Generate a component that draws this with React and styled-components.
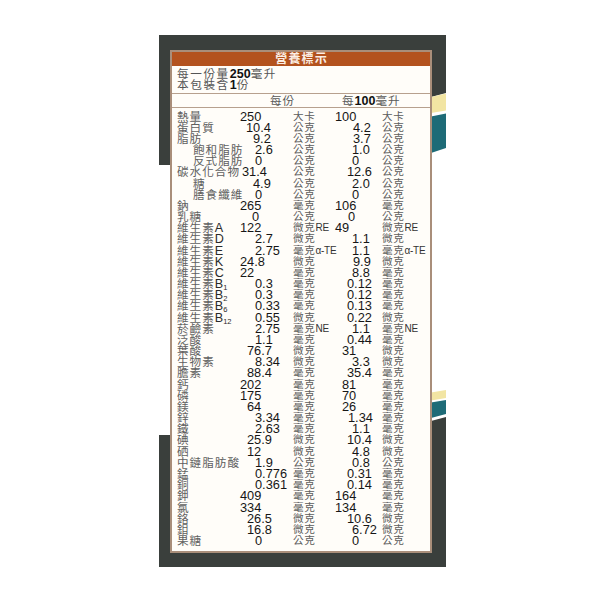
import React from "react";
import styled, { createGlobalStyle } from "styled-components";

const Global = createGlobalStyle`
  html, body { margin: 0; padding: 0; background: #ffffff; }
  body { font-family: "Liberation Sans", "Noto Sans CJK TC", sans-serif; }
`;

const SANS = `"Liberation Sans", "Noto Sans CJK TC", sans-serif`;

const Page = styled.div`
  width: 600px;
  height: 600px;
  box-sizing: border-box;
  padding: 35px 0 0 159px;
`;

const Panel = styled.div`
  position: relative;
  width: 287px;
  height: 532px;
  box-sizing: border-box;
  padding: 15px 14px 14px 11px;
  background: #3a3f3c;
`;

const Decor = styled.svg`
  position: absolute;
  left: 0;
  top: 0;
  z-index: 0;
`;

const Label = styled.div`
  position: relative;
  z-index: 1;
  box-sizing: border-box;
  height: 503px;
  border: 2px solid #a98e7a;
  background: #fffdf9;
  display: flex;
  flex-direction: column;
  font-family: ${SANS};
`;

const TitleBar = styled.div`
  height: 14px;
  line-height: 14px;
  background: #b3521e;
  color: #fbeee4;
  text-align: center;
  font-size: 12px;
  font-weight: 700;
  letter-spacing: 1.2px;
  text-indent: 1.2px;
`;

const InfoBlock = styled.div`
  padding: 1.5px 5px 3px 5px;
  border-bottom: 1px solid #b7a08e;
`;

const InfoLine = styled.div`
  height: 11px;
  line-height: 11px;
  font-size: 11.6px;
  letter-spacing: 1.6px;
  color: #555;
  white-space: nowrap;
`;

const Strong = styled.span`
  color: #111;
  font-weight: 700;
  font-size: 12.5px;
  letter-spacing: 0;
`;

const Grid = styled.div`
  display: grid;
  grid-template-columns: 63px 53px 42px 47px 1fr;
  padding-left: 5px;
  white-space: nowrap;
`;

const HeadRow = styled(Grid)`
  height: 13.5px;
  line-height: 14px;
  color: #5a5a5a;
  border-bottom: 1px solid #b7a08e;
`;

const HeadCell = styled.span`
  padding-left: ${(p) => p.$off || 0}px;
  font-size: 11.6px;
  letter-spacing: 1px;
`;

const Rows = styled.div`
  padding-top: 2.5px;
`;

const Row = styled(Grid)`
  height: 11.18px;
  line-height: 11.18px;
`;

const Name = styled.span`
  padding-left: ${(p) => (p.$indent ? 16 : 0)}px;
  font-size: 11.6px;
  letter-spacing: 1px;
  color: #606060;
`;

const Value = styled.span`
  padding-left: ${(p) => p.$off || 0}px;
  font-size: 12.8px;
  color: #161616;
`;

const Unit = styled.span`
  font-size: 10.6px;
  letter-spacing: 0.6px;
  color: #5c5c5c;
`;

const Latin = styled.span`
  color: #2a2a2a;
  font-size: 12.6px;
  letter-spacing: 0;
`;

const Sub = styled.span`
  font-size: 7.5px;
  vertical-align: -2px;
  letter-spacing: 0;
  color: #2a2a2a;
`;

const Small = styled.span`
  font-size: 10px;
  letter-spacing: -0.2px;
  color: #333;
`;

const vit = (letter, sub) => (
  <>
    維生素<Latin>{letter}</Latin>
    {sub ? <Sub>{sub}</Sub> : null}
  </>
);

const RE = <>微克<Small>RE</Small></>;
const TE = <>毫克<Small>α-TE</Small></>;
const NE = <>毫克<Small>NE</Small></>;

const rows = [
  ["熱量", 0, "250", 0, "大卡", "100", 0, "大卡"],
  ["蛋白質", 0, "10.4", 6, "公克", "4.2", 18, "公克"],
  ["脂肪", 0, "9.2", 13, "公克", "3.7", 18, "公克"],
  ["飽和脂肪", 1, "2.6", 15, "公克", "1.0", 17, "公克"],
  ["反式脂肪", 1, "0", 15, "公克", "0", 17, "公克"],
  ["碳水化合物", 0, "31.4", 2, "公克", "12.6", 12, "公克"],
  ["糖", 1, "4.9", 13, "公克", "2.0", 17, "公克"],
  ["膳食纖維", 1, "0", 15, "公克", "0", 17, "公克"],
  ["鈉", 0, "265", 0, "毫克", "106", 0, "毫克"],
  ["乳糖", 0, "0", 12, "公克", "0", 13, "公克"],
  [vit("A"), 0, "122", 0, RE, "49", 0, RE],
  [vit("D"), 0, "2.7", 15, "微克", "1.1", 17, "微克"],
  [vit("E"), 0, "2.75", 15, TE, "1.1", 17, TE],
  [vit("K"), 0, "24.8", 0, "微克", "9.9", 18, "微克"],
  [vit("C"), 0, "22", 0, "毫克", "8.8", 17, "毫克"],
  [vit("B", "1"), 0, "0.3", 15, "毫克", "0.12", 12, "毫克"],
  [vit("B", "2"), 0, "0.3", 15, "毫克", "0.12", 12, "毫克"],
  [vit("B", "6"), 0, "0.33", 15, "毫克", "0.13", 12, "毫克"],
  [vit("B", "12"), 0, "0.55", 15, "微克", "0.22", 12, "微克"],
  ["菸鹼素", 0, "2.75", 15, NE, "1.1", 17, NE],
  ["泛酸", 0, "1.1", 15, "毫克", "0.44", 12, "毫克"],
  ["葉酸", 0, "76.7", 7, "微克", "31", 7, "微克"],
  ["生物素", 0, "8.34", 15, "微克", "3.3", 17, "微克"],
  ["膽素", 0, "88.4", 7, "毫克", "35.4", 12, "毫克"],
  ["鈣", 0, "202", 0, "毫克", "81", 7, "毫克"],
  ["磷", 0, "175", 0, "毫克", "70", 7, "毫克"],
  ["鎂", 0, "64", 7, "毫克", "26", 7, "毫克"],
  ["鋅", 0, "3.34", 15, "毫克", "1.34", 13, "毫克"],
  ["鐵", 0, "2.63", 15, "毫克", "1.1", 17, "毫克"],
  ["碘", 0, "25.9", 7, "微克", "10.4", 12, "微克"],
  ["硒", 0, "12", 7, "微克", "4.8", 17, "微克"],
  ["中鏈脂肪酸", 0, "1.9", 15, "公克", "0.8", 17, "公克"],
  ["錳", 0, "0.776", 15, "毫克", "0.31", 12, "毫克"],
  ["銅", 0, "0.361", 15, "毫克", "0.14", 12, "毫克"],
  ["鉀", 0, "409", 0, "毫克", "164", 0, "毫克"],
  ["氯", 0, "334", 0, "毫克", "134", 0, "毫克"],
  ["鉻", 0, "26.5", 7, "微克", "10.6", 12, "微克"],
  ["鉬", 0, "16.8", 7, "微克", "6.72", 17, "微克"],
  ["果糖", 0, "0", 15, "公克", "0", 17, "公克"],
];

function PanelDecor() {
  return (
    <Decor width="287" height="532" viewBox="0 0 287 532">
      <rect x="0" y="130" width="11" height="270" fill="#ffffff" />
      <polygon points="272,62 287,58 287,386 272,386" fill="#ffffff" />
      <polygon points="272,62 287,58.5 287,75.5 272,78" fill="#f2e5a3" />
      <polygon points="272,81.5 287,78.5 287,113 272,118" fill="#1e6b77" />
      <polygon points="272,357.5 287,355 287,363 272,365.5" fill="#f2e5a3" />
      <polygon points="272,367.5 287,365 287,379 272,383" fill="#1e6b77" />
      <polygon points="272,386 287,382 287,390 272,390" fill="#3a3f3c" />
    </Decor>
  );
}

export default function App() {
  return (
    <>
      <Global />
      <Page>
        <Panel>
          <PanelDecor />
          <Label>
            <TitleBar>營養標示</TitleBar>
            <InfoBlock>
              <InfoLine>
                每一份量<Strong>250</Strong>毫升
              </InfoLine>
              <InfoLine>
                本包裝含<Strong>1</Strong>份
              </InfoLine>
            </InfoBlock>
            <HeadRow>
              <span />
              <HeadCell $off={30}>每份</HeadCell>
              <span />
              <HeadCell $off={7}>
                每<Strong>100</Strong>毫升
              </HeadCell>
              <span />
            </HeadRow>
            <Rows>
              {rows.map((r, i) => (
                <Row key={i}>
                  <Name $indent={r[1]}>{r[0]}</Name>
                  <Value $off={r[3]}>{r[2]}</Value>
                  <Unit>{r[4]}</Unit>
                  <Value $off={r[6]}>{r[5]}</Value>
                  <Unit>{r[7]}</Unit>
                </Row>
              ))}
            </Rows>
          </Label>
        </Panel>
      </Page>
    </>
  );
}
